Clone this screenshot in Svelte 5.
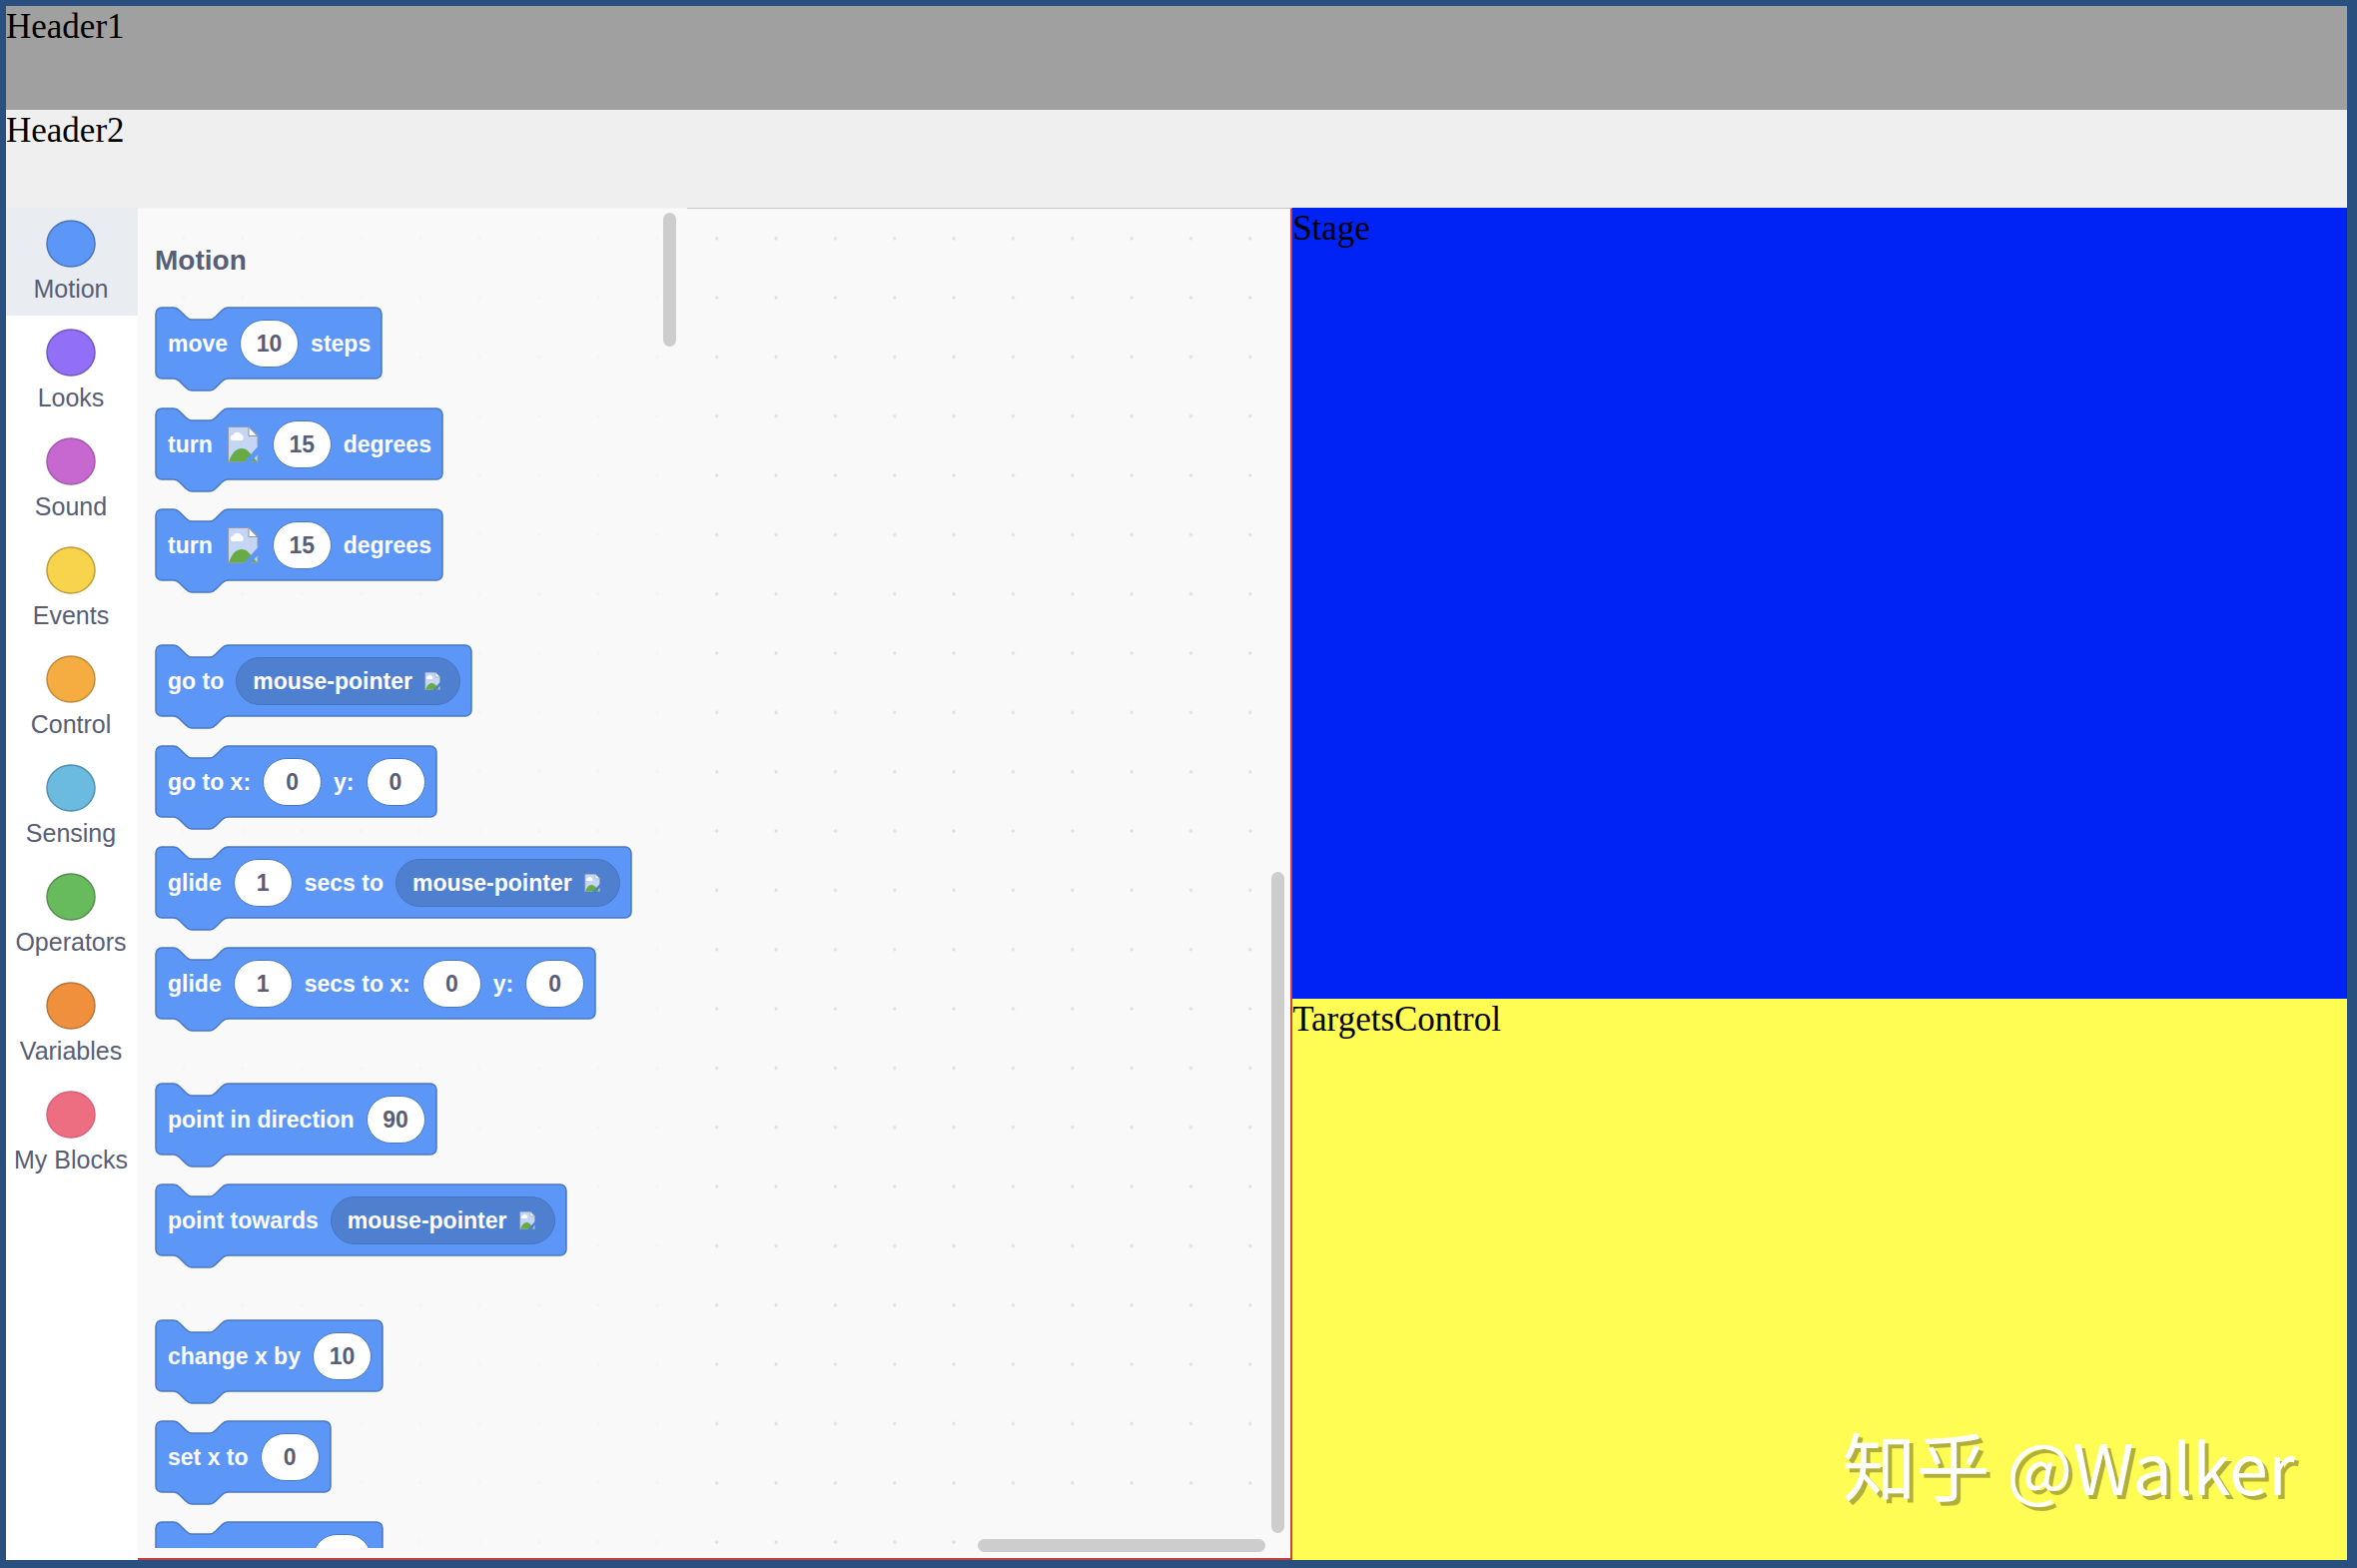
<script lang="ts">
  type Part =
    | { type: 'text'; value: string }
    | { type: 'number'; value: string; label: string }
    | { type: 'menu'; value: string; label: string }
    | { type: 'icon' };

  const text = (value: string): Part => ({ type: 'text', value });
  const num = (value: string, label: string): Part => ({ type: 'number', value, label });
  const menu = (label: string): Part => ({ type: 'menu', value: 'mouse-pointer', label });
  const icon: Part = { type: 'icon' };

  const categories = [
    { name: 'Motion', fill: '#5c97f8', stroke: '#4a73b8' },
    { name: 'Looks', fill: '#926ff7', stroke: '#7355c4' },
    { name: 'Sound', fill: '#c668cf', stroke: '#a557ad' },
    { name: 'Events', fill: '#f7d44b', stroke: '#bd9c3a' },
    { name: 'Control', fill: '#f5ad42', stroke: '#bf8a3c' },
    { name: 'Sensing', fill: '#6bbbe0', stroke: '#528fae' },
    { name: 'Operators', fill: '#68bb5c', stroke: '#568c4f' },
    { name: 'Variables', fill: '#f0903c', stroke: '#b3763f' },
    { name: 'My Blocks', fill: '#ee6e81', stroke: '#d95f78' },
  ];

  const groups: Part[][][] = [
    [
      [text('move'), num('10', 'Steps'), text('steps')],
      [text('turn'), icon, num('15', 'Degrees right'), text('degrees')],
      [text('turn'), icon, num('15', 'Degrees left'), text('degrees')],
    ],
    [
      [text('go to'), menu('Go to target')],
      [text('go to x:'), num('0', 'x'), text('y:'), num('0', 'y')],
      [text('glide'), num('1', 'Seconds'), text('secs to'), menu('Glide target')],
      [text('glide'), num('1', 'Seconds'), text('secs to x:'), num('0', 'x'), text('y:'), num('0', 'y')],
    ],
    [
      [text('point in direction'), num('90', 'Direction')],
      [text('point towards'), menu('Point target')],
    ],
    [
      [text('change x by'), num('10', 'Change x')],
      [text('set x to'), num('0', 'Set x')],
      [text('change y by'), num('10', 'Change y')],
    ],
  ];

  let selected = $state('Motion');
  let widths: number[][] = $state(groups.map((g) => g.map(() => 0)));

  // Stack block outline: notch on top, matching bump below
  function outline(w: number) {
    const r = w - 1;
    return (
      `M1 7a6 6 0 0 1 6-6H19c3 0 4.5 1.5 6 3l6 6c1.5 1.5 3 3 6 3h18c3 0 4.5-1.5 6-3l6-6c1.5-1.5 3-3 6-3` +
      `H${r - 6}a6 6 0 0 1 6 6V66a6 6 0 0 1-6 6H73c-3 0-4.5 1.5-6 3l-6 6c-1.5 1.5-3 3-6 3H37` +
      `c-3 0-4.5-1.5-6-3l-6-6c-1.5-1.5-3-3-6-3H7a6 6 0 0 1-6-6z`
    );
  }
</script>

{#snippet brokenImage(cls: string)}
  <svg class={cls} viewBox="0 0 36 36" aria-hidden="true">
    <path d="M3.5 .5H24l9 9V35.5H3.5z" fill="#c5d5f5" />
    <path d="M7 14a3 3 0 0 1 1.5-5.5a4.5 4.5 0 0 1 8-.5a3.5 3.5 0 0 1 1 6z" fill="#fff" />
    <path d="M4 35.5C7 27 11 22 17 22s9 6 16 13.5z" fill="#68ab45" />
    <path d="M34 19v8L26 36H19z" class="slash" />
    <path d="M24 .5l9 9H24z" fill="#fff" stroke="#8a93a8" />
    <path d="M33 19V9.5L24 .5H3.5V35.5H19M26 35.5h7V28" fill="none" stroke="#9099ab" />
  </svg>
{/snippet}

<div class="app">
  <header class="header1">Header1</header>
  <header class="header2">Header2</header>

  <div class="content">
    <main class="editor">
      <nav class="categories" aria-label="Block categories">
        {#each categories as c}
          <button class="category" class:selected={selected === c.name} onclick={() => (selected = c.name)}>
            <svg class="bubble" viewBox="0 0 50 48" aria-hidden="true">
              <ellipse cx="25" cy="24" rx="24" ry="23" fill={c.fill} stroke={c.stroke} stroke-width="1.5" />
            </svg>
            <span>{c.name}</span>
          </button>
        {/each}
      </nav>

      <div class="workspace">
        <svg class="dots" aria-hidden="true">
          <defs>
            <pattern id="grid" width="40" height="40" patternUnits="userSpaceOnUse" patternTransform="translate(16 0) scale(1.4835)">
              <circle cx="20" cy="20" r="1.1" fill="#dedede" />
            </pattern>
          </defs>
          <rect width="100%" height="100%" fill="url(#grid)" />
        </svg>

        <section class="palette">
          <h2>Motion</h2>
          {#each groups as group, g}
            <div class="group">
              {#each group as block, b}
                <div class="block" bind:clientWidth={widths[g][b]}>
                  <svg class="shape" width={widths[g][b]} height="86" aria-hidden="true">
                    <path d={outline(widths[g][b])} />
                  </svg>
                  {#each block as part}
                    {#if part.type === 'text'}
                      <span>{part.value}</span>
                    {:else if part.type === 'number'}
                      <input type="text" value={part.value} aria-label={part.label} />
                    {:else if part.type === 'menu'}
                      <label class="menu">
                        <select aria-label={part.label}>
                          <option>{part.value}</option>
                        </select>
                        {@render brokenImage('arrow')}
                      </label>
                    {:else}
                      {@render brokenImage('turn')}
                    {/if}
                  {/each}
                </div>
              {/each}
            </div>
          {/each}
        </section>

        <div class="bar palette-bar"></div>
        <div class="bar vertical-bar"></div>
        <div class="bar horizontal-bar"></div>
      </div>
    </main>

    <aside class="side">
      <section class="stage">Stage</section>
      <section class="targets">
        TargetsControl
        <div class="watermark">知乎 <span>@Walker</span></div>
      </section>
    </aside>
  </div>
</div>

<style>
  :global(body) {
    margin: 0;
  }

  .app {
    box-sizing: border-box;
    display: grid;
    grid-template-rows: 104px 98px minmax(0, 1fr);
    height: 100vh;
    padding: 6px 10px 8px 6px;
    background: #29507f;
    color: #000;
    font-family: 'Liberation Serif', 'Times New Roman', serif;
    font-size: 35px;
    line-height: 42px;
  }

  .header1 {
    background: #a0a0a0;
  }

  .header2 {
    background: #efefef;
  }

  .content {
    display: grid;
    grid-template-columns: minmax(0, 61fr) minmax(0, 50fr);
    min-height: 0;
  }

  .editor {
    display: grid;
    grid-template-columns: 132px minmax(0, 1fr);
    min-height: 0;
    background: #fff;
    font-family: 'Liberation Sans', Arial, sans-serif;
  }

  .categories {
    display: grid;
    grid-auto-rows: 108px;
    gap: 1px;
  }

  .category {
    display: flex;
    flex-direction: column;
    align-items: center;
    gap: 7px;
    padding: 12px 2px 0 0;
    border: 0;
    background: none;
    color: #575e75;
    font-family: inherit;
    font-size: 25px;
    line-height: 28px;
    white-space: nowrap;
    cursor: pointer;
  }

  .category.selected {
    background: #e9edf2;
  }

  .bubble {
    width: 50px;
    height: 48px;
    flex: none;
  }

  .workspace {
    position: relative;
    box-sizing: border-box;
    min-height: 0;
    border-top: 1px solid #c6c6c6;
    border-right: 2px solid #c9423c;
    border-bottom: 2px solid #c0403c;
    background: #f9f9f9;
  }

  .dots {
    position: absolute;
    inset: 0;
    width: 100%;
    height: 100%;
  }

  .palette {
    position: relative;
    box-sizing: border-box;
    width: 550px;
    height: calc(100% - 9px);
    margin-top: -1px;
    padding: 36px 17px 0;
    overflow: hidden;
    background: rgba(249, 249, 249, 0.8);
    border-top: 1px solid #f4f4f4;
  }

  h2 {
    margin: 0 0 30px;
    color: #575e75;
    font-size: 28px;
    line-height: 32px;
  }

  .group {
    display: flex;
    flex-direction: column;
    align-items: flex-start;
    gap: 29px;
    margin-bottom: 64px;
  }

  .block {
    position: relative;
    display: flex;
    align-items: center;
    gap: 12px;
    box-sizing: border-box;
    height: 72px;
    padding: 2px 12px 0 13px;
    color: #fff;
    font-size: 23px;
    font-weight: bold;
    line-height: 28px;
    white-space: nowrap;
  }

  .shape {
    position: absolute;
    top: 0;
    left: 0;
    fill: #5c97f8;
    stroke: #4a78c0;
    stroke-width: 1.5;
  }

  .block > :not(.shape) {
    position: relative;
  }

  input {
    box-sizing: border-box;
    width: 59px;
    height: 48px;
    padding: 1px 0 0;
    border: 1px solid #4a78c0;
    border-radius: 24px;
    background: #fff;
    color: #575e75;
    font: inherit;
    text-align: center;
  }

  .menu {
    display: flex;
    align-items: center;
    gap: 11px;
    box-sizing: border-box;
    height: 48px;
    padding: 0 18px 0 16px;
    border: 1px solid #4675c0;
    border-radius: 24px;
    background: #4f80cf;
  }

  select {
    appearance: none;
    padding: 0;
    border: 0;
    background: none;
    color: inherit;
    font: inherit;
  }

  .turn {
    width: 36px;
    height: 36px;
  }

  .arrow {
    width: 18px;
    height: 18px;
  }

  .slash {
    fill: #5c97f8;
  }

  .arrow .slash {
    fill: #4f80cf;
  }

  .bar {
    position: absolute;
    border-radius: 7px;
    background: #cdcdcd;
  }

  .palette-bar {
    top: 4px;
    left: 526px;
    width: 13px;
    height: 134px;
  }

  .vertical-bar {
    right: 6px;
    bottom: 25px;
    width: 13px;
    height: 49%;
  }

  .horizontal-bar {
    right: 25px;
    bottom: 6px;
    width: 25%;
    height: 13px;
  }

  .side {
    display: flex;
    flex-direction: column;
    min-height: 0;
  }

  .stage {
    aspect-ratio: 4 / 3;
    background: #0023f5;
  }

  .targets {
    position: relative;
    flex: 1;
    min-height: 0;
    background: #fffc54;
  }

  .watermark {
    position: absolute;
    right: 52px;
    bottom: 50px;
    color: #fff;
    font-family: 'Noto Sans CJK SC', sans-serif;
    font-size: 74px;
    line-height: 90px;
    text-shadow: 4px 4px 0 rgba(0, 0, 0, 0.3);
    white-space: nowrap;
  }

  .watermark span {
    font-size: 70px;
  }
</style>
